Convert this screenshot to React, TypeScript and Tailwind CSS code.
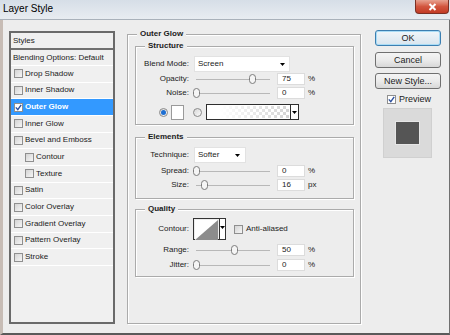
import type { ReactNode } from 'react';

type StyleItem = {
  name: string;
  indent?: boolean;
  checked?: boolean;
  selected?: boolean;
};

const styleItems: StyleItem[] = [
  { name: 'Drop Shadow' },
  { name: 'Inner Shadow' },
  { name: 'Outer Glow', checked: true, selected: true },
  { name: 'Inner Glow' },
  { name: 'Bevel and Emboss' },
  { name: 'Contour', indent: true },
  { name: 'Texture', indent: true },
  { name: 'Satin' },
  { name: 'Color Overlay' },
  { name: 'Gradient Overlay' },
  { name: 'Pattern Overlay' },
  { name: 'Stroke' },
];

const Checkbox = ({ checked = false, className = '' }: { checked?: boolean; className?: string }) => (
  <span
    className={`flex h-[9px] w-[9px] shrink-0 items-center justify-center border border-[#8f8f8f] ${
      checked ? 'bg-white' : 'bg-gradient-to-br from-[#d4d4d4] to-[#f6f6f6]'
    } ${className}`}
  >
    {checked && (
      <svg width="7" height="7" viewBox="0 0 7 7">
        <path d="M0.8 3.4 L2.8 5.6 L6.2 0.8" fill="none" stroke="#2b4f9e" strokeWidth="1.4" />
      </svg>
    )}
  </span>
);

const Radio = ({ checked = false, className = '' }: { checked?: boolean; className?: string }) => (
  <span
    className={`flex h-[9px] w-[9px] shrink-0 items-center justify-center rounded-full border border-[#8a8a8a] bg-gradient-to-br from-[#d8d8d8] to-[#fafafa] ${className}`}
  >
    {checked && <span className="h-[5px] w-[5px] rounded-full bg-[#1e6fd2]" />}
  </span>
);

const Arrow = () => (
  <svg width="5" height="3" viewBox="0 0 5 3">
    <path d="M0 0 H5 L2.5 3 Z" fill="#000" />
  </svg>
);

const Thumb = () => (
  <svg width="7" height="10" viewBox="0 0 7 10">
    <rect x="0.5" y="0.5" width="6" height="9" rx="3" fill="#f5f5f5" stroke="#7d7d7d" />
  </svg>
);

const Slider = ({ value, max = 100 }: { value: number; max?: number }) => (
  <div className="relative ml-[4px] h-full w-[80px] shrink-0">
    <div className="absolute left-[3px] top-1/2 h-px w-[74px] bg-[#b8b8b8]" />
    <div className="absolute top-1/2 flex -translate-y-1/2" style={{ left: Math.round((value / max) * 75) }}>
      <Thumb />
    </div>
  </div>
);

const NumBox = ({ value, unit }: { value: string; unit: string }) => (
  <>
    <span className="ml-[4px] flex h-[12px] w-[28px] items-center border border-[#dcdcdc] bg-white pl-[4px]">{value}</span>
    <span className="ml-[3px]">{unit}</span>
  </>
);

const Select = ({ value, className }: { value: string; className: string }) => (
  <span className={`ml-[5px] flex h-[16px] items-center justify-between border border-[#e2e2e2] bg-white pl-[3px] ${className}`}>
    {value}
    <Arrow />
  </span>
);

const Row = ({ label, className, children }: { label: string; className: string; children: ReactNode }) => (
  <div className={`flex items-center ${className}`}>
    <span className="w-[53px] shrink-0 text-right">{label}</span>
    {children}
  </div>
);

const Group = ({ title, className, children }: { title: string; className: string; children: ReactNode }) => (
  <fieldset className={`border border-[#ababab] shadow-[inset_1px_1px_0_#fff,1px_1px_0_#fff] ${className}`}>
    <legend className="ml-[9px] bg-[#ededed] px-[3px] font-bold leading-[10px]">{title}</legend>
    {children}
  </fieldset>
);

const Button = ({ children, primary = false, className = '' }: { children: ReactNode; primary?: boolean; className?: string }) => (
  <div
    className={`flex h-[16px] w-[66px] items-center justify-center rounded-[3px] border text-[9px] ${
      primary
        ? 'border-[#3c7fb1] bg-gradient-to-b from-[#f0f6fa] to-[#d9e5ee] shadow-[inset_0_0_0_1px_#a9dcf6]'
        : 'border-[#707070] bg-gradient-to-b from-[#f4f4f4] via-[#ebebeb] to-[#d8d8d8]'
    } ${className}`}
  >
    {children}
  </div>
);

export default function App() {
  return (
    <div className="flex h-[335px] w-[450px] flex-col overflow-hidden bg-[#ededed] font-['Liberation_Sans',Arial,sans-serif] text-[8px] leading-none text-[#1b1b1b]">
      {/* title bar */}
      <div className="flex h-[20px] shrink-0 items-start justify-between border-b border-[#a9b1ba] bg-gradient-to-b from-[#d6dee7] to-[#e8ecf1]">
        <span className="ml-[3px] mt-[4px] text-[10px] text-black">Layer Style</span>
        <div className="mr-px flex h-[14px] w-[34px] items-center justify-center rounded-b-[4px] border border-t-0 border-[#7b3024] bg-gradient-to-b from-[#e7a291] via-[#d2563f] to-[#c23a24]">
          <svg width="9" height="8" viewBox="0 0 9 8">
            <path d="M1.5 1 L7.5 7 M7.5 1 L1.5 7" stroke="#fff" strokeWidth="2" />
          </svg>
        </div>
      </div>

      {/* body */}
      <div className="flex flex-1 items-start border-b-2 border-l-[3px] border-r border-b-[#5a5a5a] border-l-[#c7bcb5] border-r-[#707070] pl-[6px] pt-[9px]">
        {/* styles list */}
        <div className="mt-[2px] flex h-[293px] w-[106px] shrink-0 flex-col border-2 border-[#6a6a6a] bg-[#f0f0f0]">
          <div className="flex h-[15px] items-center pl-[2px]">Styles</div>
          <div className="h-[2px] bg-[#707070]" />
          <div className="flex h-[16px] items-center border-b border-white pl-[2px]">Blending Options: Default</div>
          {styleItems.map((s) => (
            <div
              key={s.name}
              className={`flex h-[16.67px] items-center gap-[2px] border-b border-white ${s.indent ? 'pl-[14px]' : 'pl-[3px]'} ${
                s.selected ? 'bg-[#3399ff] font-bold text-white' : ''
              }`}
            >
              <Checkbox checked={s.checked} />
              {s.name}
            </div>
          ))}
        </div>

        {/* outer glow settings */}
        <fieldset className="ml-[12px] h-[295px] w-[234px] shrink-0 border border-[#ababab] pl-[7px] pr-[6px] shadow-[inset_1px_1px_0_#fff,1px_1px_0_#fff]">
          <legend className="ml-[2px] bg-[#ededed] px-[3px] font-bold leading-[10px]">Outer Glow</legend>

          <Group title="Structure" className="mt-[2px] pb-[4px]">
            <Row label="Blend Mode:" className="mt-[5px] h-[16px]">
              <Select value="Screen" className="w-[96px] pr-[4px]" />
            </Row>
            <Row label="Opacity:" className="h-[14px]">
              <Slider value={75} />
              <NumBox value="75" unit="%" />
            </Row>
            <Row label="Noise:" className="h-[14px]">
              <Slider value={0} />
              <NumBox value="0" unit="%" />
            </Row>
            <div className="mt-[4px] flex h-[16px] items-center">
              <Radio checked className="ml-[23px]" />
              <span className="ml-[3px] h-[15px] w-[13px] border border-[#9a9a9a] bg-white" />
              <Radio className="ml-[9px]" />
              <span className="ml-[4px] flex h-[16px] w-[93px] border border-[#2e2e2e]">
                <span className="flex-1 border border-white [background-image:linear-gradient(to_right,#fff_15%,rgba(255,255,255,0)_100%),repeating-conic-gradient(#d4d4d4_0%_25%,#fff_0%_50%)] [background-size:100%_100%,6px_6px]" />
                <span className="flex w-[8px] items-center justify-center border-l border-[#2e2e2e] bg-white">
                  <Arrow />
                </span>
              </span>
            </div>
          </Group>

          <Group title="Elements" className="mt-[7px] pb-[6px]">
            <Row label="Technique:" className="mt-[5px] h-[16px]">
              <Select value="Softer" className="w-[52px] pr-[5px]" />
            </Row>
            <Row label="Spread:" className="h-[15px]">
              <Slider value={0} />
              <NumBox value="0" unit="%" />
            </Row>
            <Row label="Size:" className="h-[14px]">
              <Slider value={16} max={150} />
              <NumBox value="16" unit="px" />
            </Row>
          </Group>

          <Group title="Quality" className="mt-[5px] pb-[4px]">
            <Row label="Contour:" className="mt-[4px] h-[22px]">
              <span className="ml-[4px] flex h-[22px] w-[33px] border border-[#333]">
                <svg width="23" height="20" viewBox="0 0 23 20" className="m-px">
                  <rect width="23" height="20" fill="#fff" />
                  <path d="M0 20 L23 0 V20 Z" fill="#8c8c8c" />
                </svg>
                <span className="flex flex-1 justify-center border-l border-[#333] bg-white pt-[7px]">
                  <Arrow />
                </span>
              </span>
              <Checkbox className="ml-[8px]" />
              <span className="ml-[3px]">Anti-aliased</span>
            </Row>
            <Row label="Range:" className="mt-[3px] h-[14px]">
              <Slider value={50} />
              <NumBox value="50" unit="%" />
            </Row>
            <Row label="Jitter:" className="mt-px h-[14px]">
              <Slider value={0} />
              <NumBox value="0" unit="%" />
            </Row>
          </Group>
        </fieldset>

        {/* buttons */}
        <div className="ml-[14px] mt-px flex w-[66px] shrink-0 flex-col">
          <Button primary>OK</Button>
          <Button className="mt-[6px]">Cancel</Button>
          <Button className="mt-[5px]">New Style...</Button>
          <div className="mt-[4px] flex h-[12px] items-center pl-[12px] text-[9px]">
            <Checkbox checked />
            <span className="ml-[3px]">Preview</span>
          </div>
          <div className="ml-[8px] mt-[3px] flex h-[50px] w-[49px] items-center justify-center border border-[#d0d0d0] bg-[#dadada]">
            <div className="h-[24px] w-[25px] border border-[#e6e6e6] bg-[#555]" />
          </div>
        </div>
      </div>
    </div>
  );
}
